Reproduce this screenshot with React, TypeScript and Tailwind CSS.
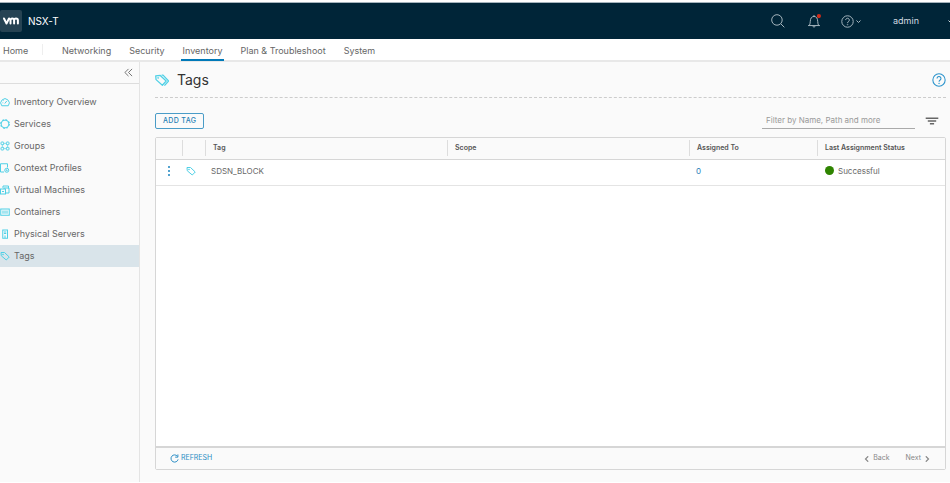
import type { ReactNode } from 'react'

type IconProps = { className?: string; children: ReactNode }

function Icon({ className = 'size-[10px]', children }: IconProps) {
  return (
    <svg viewBox="0 0 20 20" fill="none" stroke="currentColor" strokeWidth="2" className={`shrink-0 ${className}`} aria-hidden="true">
      {children}
    </svg>
  )
}

const tagShape = (
  <>
    <path d="M2 3 9 3 18.5 12 12.5 18 2.5 9.5Z" strokeLinejoin="round" />
    <circle cx="6" cy="7" r=".8" />
  </>
)

const sidebarLinks = [
  {
    label: 'Inventory Overview',
    icon: (
      <>
        <path d="M3.5 17.5a8.5 8.5 0 1 1 13 0Z" strokeLinejoin="round" />
        <path d="m9.5 13 4-5M5 11.5h1.5M7 7l1 1" />
      </>
    ),
  },
  {
    label: 'Services',
    icon: (
      <>
        <circle cx="10" cy="10" r="7.8" />
        <circle cx="10" cy="10" r="9" strokeDasharray="3.53 3.53" />
      </>
    ),
  },
  {
    label: 'Groups',
    icon: (
      <>
        <rect x="2" y="2" width="5.5" height="5.5" rx="1.5" />
        <rect x="12.5" y="2" width="5.5" height="5.5" rx="1.5" />
        <rect x="2" y="12.5" width="5.5" height="5.5" rx="1.5" />
        <rect x="12.5" y="12.5" width="5.5" height="5.5" rx="1.5" />
        <path d="M7.5 5h5M7.5 15h5M5 7.5v5M15 7.5v5" strokeWidth="1" />
      </>
    ),
  },
  {
    label: 'Context Profiles',
    icon: (
      <>
        <path d="M8 18H1V1.5h14V9" />
        <circle cx="13.5" cy="14.5" r="4" />
        <circle cx="13.5" cy="14.5" r="1" />
      </>
    ),
  },
  {
    label: 'Virtual Machines',
    icon: (
      <>
        <path d="M6 6V2h11v5" />
        <rect x="1" y="8" width="10" height="10" />
        <path d="M8 8V6h10v10h-7M4 13h4" />
      </>
    ),
  },
  {
    label: 'Containers',
    icon: (
      <>
        <rect x="1.5" y="4" width="17" height="12.5" />
        <path d="M6 7v6.5M10 7v6.5M14 7v6.5" />
      </>
    ),
  },
  {
    label: 'Physical Servers',
    icon: (
      <>
        <rect x="5.5" y="2" width="9.5" height="16.5" />
        <path d="M8 6h4.5M8 9h4.5M10 13v5" />
      </>
    ),
  },
  { label: 'Tags', icon: tagShape, active: true },
]

const navLinks = [
  { label: 'Networking' },
  { label: 'Security' },
  { label: 'Inventory', active: true },
  { label: 'Plan & Troubleshoot' },
  { label: 'System' },
]

const columns = ['', '', 'Tag', 'Scope', 'Assigned To', 'Last Assignment Status']

function HelpIcon({ className }: { className: string }) {
  return (
    <Icon className={className}>
      <circle cx="10" cy="10" r="8.8" strokeWidth="1.5" />
      <path d="M7.2 7.8a2.8 2.8 0 1 1 4.5 2.2c-1 .7-1.6 1.1-1.6 2.4" strokeWidth="1.5" />
      <circle cx="10.1" cy="14.8" r=".6" strokeWidth="1" />
    </Icon>
  )
}

function Header() {
  return (
    <header className="mt-[2px] flex h-[37px] items-center border-t border-[#a5b4bd] bg-[#002538] text-white">
      <div className="flex size-[22px] items-center justify-center rounded-[2px] bg-[#264353]">
        <svg viewBox="0 0 22 22" className="size-[22px]" fill="none" stroke="#fff" strokeWidth="2" strokeLinecap="round" strokeLinejoin="round" role="img" aria-label="vm">
          <path d="m4 8.5 2.5 5L9 8.5M10.5 13.5v-3.2q0-1.8 1.8-1.8t1.8 1.8v3.2M14.1 10.3q0-1.8 1.9-1.8t1.9 1.8v3.2" />
        </svg>
      </div>
      <span className="ml-[6px] text-[10px]">NSX-T</span>
      <div className="ml-auto flex items-center text-[#a9b8c1]">
        <button type="button" aria-label="Search">
          <Icon className="size-[14px]">
            <circle cx="8.5" cy="8.5" r="7.5" strokeWidth="1.4" />
            <path d="m14 14 5 5" strokeWidth="1.4" />
          </Icon>
        </button>
        <button type="button" aria-label="Notifications" className="ml-[22px]">
          <Icon className="size-[14px]">
            <path d="M1.5 16.5h17M3.5 16.2C5 14 4.2 8 6 5.5c2-2.7 6-2.7 8 0 1.8 2.5 1 8.5 2.5 10.7M8 17.5q2 2.5 4 0M10 1.5v2" strokeWidth="1.4" />
            <circle cx="17" cy="3" r="3" fill="#d02c1a" stroke="none" />
          </Icon>
        </button>
        <button type="button" aria-label="Help" className="ml-[20px] flex items-center gap-[2px]">
          <HelpIcon className="size-[13px]" />
          <Icon className="size-[5px]">
            <path d="m2 6 8 8 8-8" strokeWidth="4" />
          </Icon>
        </button>
        <button type="button" className="ml-[32px] flex items-center text-[9px] text-[#d2dbe0]">
          admin
          <span className="ml-[29px] w-[2px] overflow-hidden">
            <Icon className="size-[5px]">
              <path d="m2 6 8 8 8-8" strokeWidth="4" />
            </Icon>
          </span>
        </button>
      </div>
    </header>
  )
}

function MainNav() {
  return (
    <nav className="flex h-[23px] items-stretch border-b-2 border-[#e8e8e8] bg-white text-[9px] text-[#666]">
      <a href="#home" className="flex w-[42px] items-center pt-[2px] pl-[3px]">Home</a>
      <span className="my-[5px] w-px bg-[#eee]" />
      <div className="ml-[17px] flex gap-[14px]">
        {navLinks.map((link) => (
          <a
            key={link.label}
            href="#nav"
            className={`-mb-px flex items-center border-b-2 px-[2px] pt-[3px] ${link.active ? 'border-[#0079b8]' : 'border-transparent'}`}
          >
            {link.label}
          </a>
        ))}
      </div>
    </nav>
  )
}

function Sidebar() {
  return (
    <aside className="w-[140px] shrink-0 border-r border-[#e4e4e4]">
      <div className="flex h-[22px] items-center justify-end border-b border-[#ddd] pr-[6px]">
        <button type="button" aria-label="Collapse sidebar" className="text-[#666]">
          <Icon className="size-[9px]">
            <path d="m10 2-8 8 8 8M18 2l-8 8 8 8" />
          </Icon>
        </button>
      </div>
      <ul className="mt-[7px] text-[9px] text-[#666]">
        {sidebarLinks.map((link) => (
          <li key={link.label}>
            <a href="#inventory" className={`flex h-[22px] items-center gap-1 ${link.active ? 'bg-[#d9e4ea]' : ''}`}>
              <span className="text-[#4fd0e6]">
                <Icon>{link.icon}</Icon>
              </span>
              {link.label}
            </a>
          </li>
        ))}
      </ul>
    </aside>
  )
}

function TagTable() {
  return (
    <div className="mt-2 flex flex-1 flex-col rounded-[2px] border border-[#d6d6d6] bg-white">
      <table className="w-full table-fixed text-left">
        <colgroup>
          <col className="w-[26px]" />
          <col className="w-[23px]" />
          <col />
          <col />
          <col className="w-[128px]" />
          <col className="w-[128px]" />
        </colgroup>
        <thead className="border-b border-[#d6d6d6] bg-[#fafafa] text-[7px] text-[#555]">
          <tr className="h-[21px]">
            {columns.map((column, i) => (
              <th key={i} className="p-0 font-semibold">
                <div className={`flex h-[16px] items-center pl-[7px] ${i > 0 ? 'border-l border-[#ddd]' : ''}`}>{column}</div>
              </th>
            ))}
          </tr>
        </thead>
        <tbody className="text-[8px] text-[#666]">
          <tr className="h-[26px] border-b border-[#e4e4e4]">
            <td className="p-0 pb-[3px]">
              <button type="button" aria-label="Row actions" className="ml-[8px] block text-[#2a8dc4]">
                <svg viewBox="0 0 10 10" className="size-[10px]" fill="currentColor">
                  <path d="M4.2 0h1.6v2H4.2zM4.2 4h1.6v2H4.2zM4.2 8h1.6v2H4.2z" />
                </svg>
              </button>
            </td>
            <td className="p-0 pb-[3px] pl-1 text-[#4fd0e6]"><Icon>{tagShape}</Icon></td>
            <td className="p-0 pb-[3px] pl-[6px]">SDSN_BLOCK</td>
            <td className="p-0" />
            <td className="p-0 pb-[3px] pl-[7px]"><a href="#assigned" className="text-[#2a7fb8]">0</a></td>
            <td className="p-0 pb-[3px] pl-[8px]">
              <span className="flex items-center gap-1">
                <span className="size-[9px] rounded-full bg-[#2f8400]" />
                Successful
              </span>
            </td>
          </tr>
        </tbody>
      </table>
      <div className="mt-auto flex h-[23px] items-center border-t-2 border-[#d6d6d6] bg-[#fafafa] pr-[15px] pl-[14px] text-[7px] text-[#888]">
        <button type="button" className="flex items-center gap-[2px] text-[#2a8dc4]">
          <Icon className="size-[9px]">
            <path d="M16.5 5A8 8 0 1 0 18 12M17.5 1v6h-6" strokeWidth="2.2" />
          </Icon>
          REFRESH
        </button>
        <button type="button" className="ml-auto flex items-center gap-[3px]">
          <Icon className="size-[6px]"><path d="m14 1-9 9 9 9" strokeWidth="4" /></Icon>
          Back
        </button>
        <button type="button" className="ml-4 flex items-center gap-[3px]">
          Next
          <Icon className="size-[6px]"><path d="m6 1 9 9-9 9" strokeWidth="4" /></Icon>
        </button>
      </div>
    </div>
  )
}

export default function App() {
  return (
    <div className="flex min-h-screen flex-col bg-white font-['Inter','Noto_Sans',sans-serif]">
      <Header />
      <MainNav />
      <div className="mb-[1px] flex flex-1 bg-[#fafafa]">
        <Sidebar />
        <main className="flex min-w-0 flex-1 flex-col pr-1 pb-3 pl-[15px]">
          <div className="flex h-9 items-center border-b border-dashed border-[#ccc]">
            <Icon className="size-[14px] text-[#4fd0e6]">
              <path d="M1 4l6.5-.5 8.5 8-5.5 6L1.5 9.5ZM9.5 3h2l8 8.5-6 6.5" strokeWidth="1.8" strokeLinejoin="round" />
              <circle cx="4.5" cy="7" r=".8" strokeWidth="1.2" />
            </Icon>
            <h1 className="ml-2 text-[14px] text-[#333]">Tags</h1>
            <button type="button" aria-label="Page help" className="ml-auto text-[#2a93cc]">
              <HelpIcon className="size-[14px]" />
            </button>
          </div>
          <div className="mt-[14px] flex h-[17px] items-center">
            <button type="button" className="flex h-4 items-center rounded-[2px] border border-[#4a9cc7] px-[7px] pt-px text-[7px] font-medium tracking-wider text-[#1f7fb5]">
              ADD TAG
            </button>
            <input
              type="text"
              aria-label="Filter tags"
              placeholder="Filter by Name, Path and more"
              className="ml-auto h-[17px] w-[153px] border-b border-[#aaa] bg-transparent px-1 text-[8px] text-[#666] outline-none placeholder:text-[#999]"
            />
            <button type="button" aria-label="Filter options" className="mr-[7px] ml-[10px] text-[#666]">
              <Icon className="size-[14px]">
                <path d="M1 6h18M4 10h12M7 14h6" />
              </Icon>
            </button>
          </div>
          <TagTable />
        </main>
      </div>
    </div>
  )
}
